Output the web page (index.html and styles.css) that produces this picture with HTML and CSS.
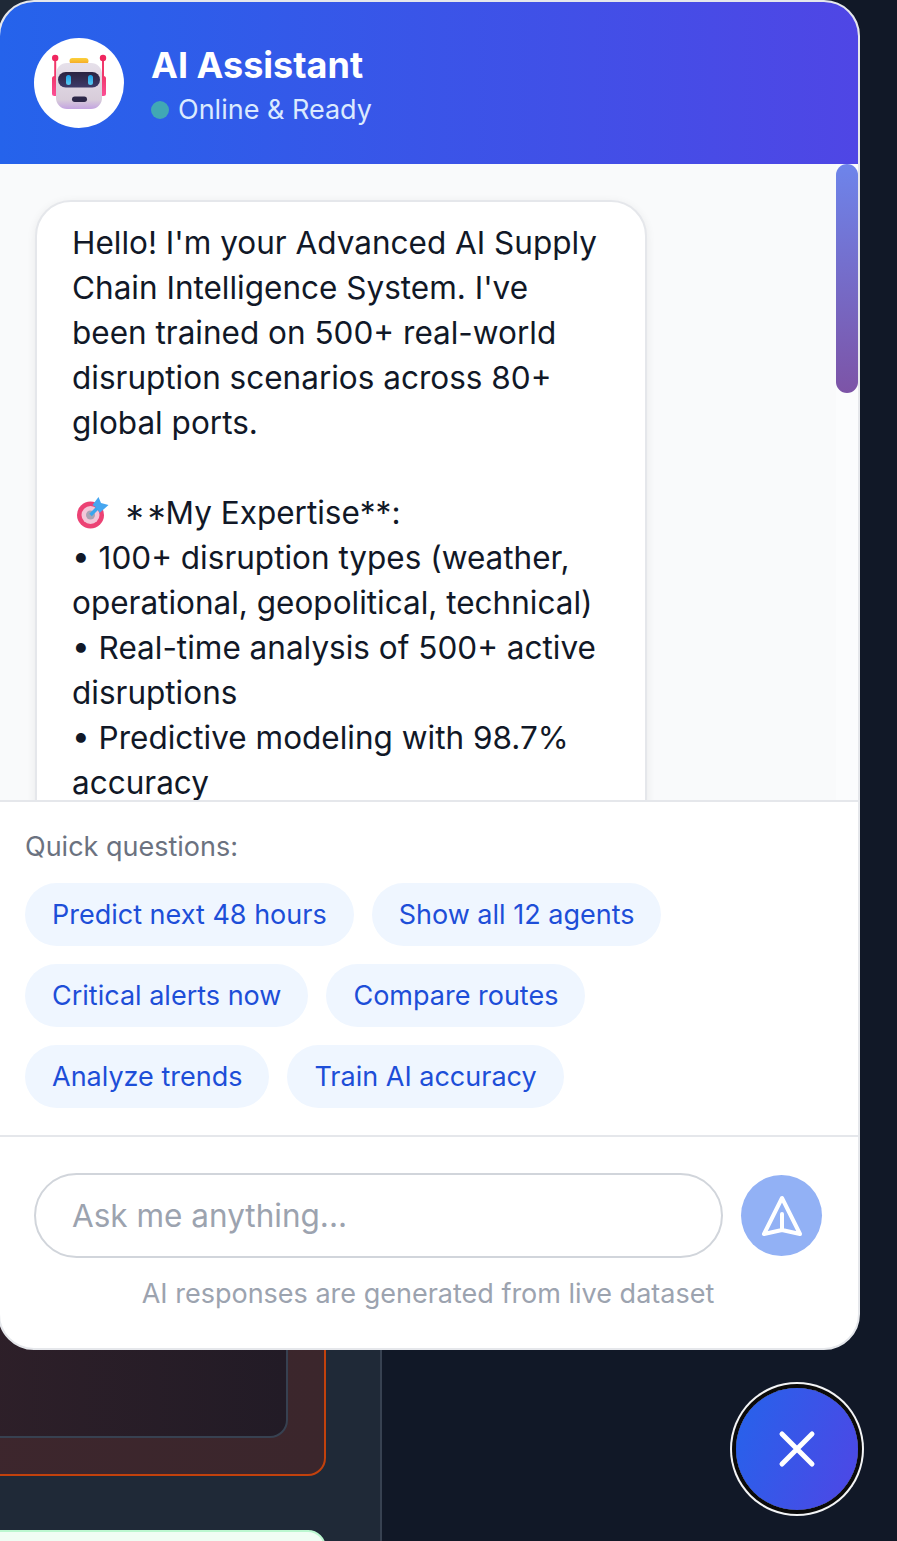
FILE: index.html
```html
<!DOCTYPE html>
<html lang="en">
<head>
<meta charset="utf-8">
<title>AI Assistant</title>
<link rel="stylesheet" href="styles.css">
</head>
<body>
<aside class="sidebar">
  <div class="alert-card"><div class="inner-card"></div></div>
  <div class="green-card"></div>
</aside>

<section class="chat">
  <header class="chat-header">
    <div class="avatar">
      <svg class="robot" width="90" height="90" viewBox="0 0 90 90">
        <defs>
          <linearGradient id="head" x1="0" y1="0" x2="0" y2="1"><stop offset="0" stop-color="#e6e0ea"/><stop offset=".8" stop-color="#d8cdda"/><stop offset="1" stop-color="#c3a3e0"/></linearGradient>
          <linearGradient id="visor" x1="0" y1="0" x2="0" y2="1"><stop offset="0" stop-color="#2a2340"/><stop offset="1" stop-color="#3d3a68"/></linearGradient>
          <linearGradient id="eye" x1="0" y1="0" x2="0" y2="1"><stop offset="0" stop-color="#1c9fe6"/><stop offset="1" stop-color="#5ccbf0"/></linearGradient>
          <linearGradient id="hat" x1="0" y1="0" x2="0" y2="1"><stop offset="0" stop-color="#fbd13c"/><stop offset="1" stop-color="#f5a623"/></linearGradient>
          <linearGradient id="ear" x1="0" y1="0" x2="0" y2="1"><stop offset="0" stop-color="#f0386b"/><stop offset="1" stop-color="#fb4f94"/></linearGradient>
        </defs>
        <rect x="20.200" y="20" width="2" height="20" fill="#f0386b"/>
        <rect x="68" y="20" width="2" height="20" fill="#f0386b"/>
        <circle cx="21.200" cy="20" r="3.200" fill="#f0265f"/>
        <circle cx="69" cy="20" r="3.200" fill="#f0265f"/>
        <rect x="18" y="38" width="8" height="20" rx="2.500" fill="url(#ear)"/>
        <rect x="64" y="38" width="8" height="20" rx="2.500" fill="url(#ear)"/>
        <rect x="35.500" y="20" width="19" height="6" rx="3" fill="url(#hat)"/>
        <rect x="22" y="25" width="46" height="46" rx="11" fill="url(#head)"/>
        <rect x="24" y="34" width="42" height="15.500" rx="7.750" fill="url(#visor)"/>
        <rect x="32" y="37" width="5" height="10" rx="2.500" fill="url(#eye)"/>
        <rect x="54" y="37" width="5" height="10" rx="2.500" fill="url(#eye)"/>
        <rect x="38" y="58.500" width="15" height="5.500" rx="2.750" fill="#2c2748"/>
      </svg>
    </div>
    <div class="header-text">
      <h1 class="title">AI Assistant</h1>
      <p class="status"><span class="dot"></span>Online &amp; Ready</p>
    </div>
  </header>

  <div class="messages">
    <div class="bubble">Hello! I'm your Advanced AI Supply Chain Intelligence System. I've been trained on 500+ real-world disruption scenarios across 80+ global ports.

<svg class="target" width="34" height="34" viewBox="0 0 34 34"><circle cx="15.500" cy="19" r="13.500" fill="#ec4274"/><circle cx="15.500" cy="19" r="9" fill="#f3c6d8"/><circle cx="15.500" cy="19" r="4.500" fill="#a9a3b3"/><path d="M15.500 19L25 9.500" stroke="#38a6ee" stroke-width="3.500"/><path d="M17.500 9L23.500 1 26 7 33.500 9 24.500 17 22 12z" fill="#46a6f0"/></svg><span class="stars"> **</span>My Expertise**:
• 100+ disruption types (weather, operational, geopolitical, technical)
• Real-time analysis of 500+ active disruptions
• Predictive modeling with 98.7% accuracy</div>
    <div class="scroll-track"><div class="scroll-thumb"></div></div>
  </div>

  <div class="quick">
    <p class="quick-label">Quick questions:</p>
    <div class="chips">
      <button class="chip">Predict next 48 hours</button>
      <button class="chip">Show all 12 agents</button>
      <button class="chip">Critical alerts now</button>
      <button class="chip">Compare routes</button>
      <button class="chip">Analyze trends</button>
      <button class="chip">Train AI accuracy</button>
    </div>
  </div>

  <div class="composer">
    <div class="input-row">
      <input class="input" type="text" placeholder="Ask me anything...">
      <button class="send" aria-label="Send">
        <svg width="48" height="48" viewBox="0 0 24 24" fill="none" stroke="#fff" stroke-width="2" stroke-linecap="round" stroke-linejoin="round"><path d="M12 19l9 2-9-18-9 18 9-2zm0 0v-8"/></svg>
      </button>
    </div>
    <p class="note">AI responses are generated from live dataset</p>
  </div>
</section>

<button class="fab" aria-label="Close">
  <svg width="60" height="60" viewBox="0 0 24 24" fill="none" stroke="#fff" stroke-width="2" stroke-linecap="round" stroke-linejoin="round"><path d="M6 18L18 6M6 6l12 12"/></svg>
</button>
</body>
</html>
```
FILE: styles.css
```css
* { box-sizing: border-box; }
html, body { margin: 0; height: 100%; }
body {
  height: 1541px;
  overflow: hidden;
  background: #111827;
  font-family: Inter, "Liberation Sans", sans-serif;
  position: relative;
}
.sidebar {
  width: 382px;
  height: 1541px;
  background: #1f2937;
  border-right: 2px solid #374151;
  overflow: hidden;
  padding-top: 30px;
}
.alert-card {
  width: 376px;
  height: 1446px;
  margin-left: -50px;
  padding: 0 36px 36px 0;
  background: linear-gradient(90deg, #3d262d, #3b262c);
  border: 2px solid #c2410c;
  border-radius: 0 0 18px 18px;
}
.inner-card {
  height: 100%;
  background: linear-gradient(90deg, #2f2029, #221b26);
  border: 2px solid #374151;
  border-radius: 0 0 18px 18px;
}
.green-card {
  width: 376px;
  height: 80px;
  margin-left: -50px;
  margin-top: 54px;
  background: #f0fdf4;
  border: 2px solid #bbf7d0;
  border-radius: 18px;
}
.chat {
  position: absolute;
  left: -2px;
  top: 0;
  width: 862px;
  height: 1350px;
  display: flex;
  flex-direction: column;
  background: #fff;
  border: 2px solid #e5e7eb;
  border-radius: 36px;
  overflow: hidden;
}
.chat-header {
  flex: none;
  height: 162px;
  display: flex;
  align-items: center;
  gap: 27px;
  padding: 0 34px;
  background: linear-gradient(90deg, #2563eb, #4f46e5);
}
.avatar {
  flex: none;
  width: 90px;
  height: 90px;
  border-radius: 50%;
  background: #fff;
}
.robot { display: block; }
.header-text { display: flex; flex-direction: column; gap: 4px; padding-top: 4px; }
.title {
  margin: 0;
  font-size: 36px;
  line-height: 45px;
  font-weight: 700;
  color: #fff;
}
.status {
  margin: 0;
  display: flex;
  align-items: center;
  gap: 9px;
  font-size: 27px;
  line-height: 36px;
  color: #dbeafe;
}
.dot {
  width: 18px;
  height: 18px;
  border-radius: 50%;
  background: #41a8b4;
}
.messages {
  flex: 1;
  min-height: 0;
  position: relative;
  overflow: hidden;
  background: #f9fafb;
  padding: 36px 34px 0 35px;
}
.bubble {
  width: 612px;
  padding: 18px 36px 36px 35px;
  background: #fff;
  border: 2px solid #e5e7eb;
  border-radius: 36px;
  box-shadow: 0 2px 10px rgba(0, 0, 0, .07);
  font-size: 31.500px;
  line-height: 45px;
  color: #111827;
  white-space: pre-line;
}
.target { vertical-align: -6px; margin-left: 3px; }
.stars {
  font-feature-settings: "case";
  letter-spacing: 1.700px;
  margin-left: 5px;
  margin-right: -3px;
}
.scroll-track {
  position: absolute;
  right: 0;
  top: 0;
  bottom: 0;
  width: 22px;
  background: #fbfcfd;
}
.scroll-thumb {
  height: 229px;
  border-radius: 11px;
  background: linear-gradient(#667eea, #764ba2);
  opacity: .95;
}
.quick {
  flex: none;
  height: 337px;
  padding: 27px 25px 0;
  background: #fff;
  border-top: 2px solid #e5e7eb;
  border-bottom: 2px solid #e5e7eb;
}
.quick-label {
  margin: 0 0 18px;
  font-size: 27px;
  line-height: 36px;
  color: #6b7280;
}
.chips { display: flex; flex-wrap: wrap; gap: 18px; }
.chip {
  height: 63px;
  padding: 0 27px;
  border: 0;
  border-radius: 32px;
  background: #eff6ff;
  color: #1d4ed8;
  font: 27px/36px Inter, "Liberation Sans", sans-serif;
}
.composer {
  flex: none;
  height: 211px;
  padding: 36px 36px 0 34px;
}
.input-row { display: flex; align-items: center; gap: 18px; }
.input {
  flex: none;
  width: 689px;
  height: 85px;
  padding: 0 36px;
  border: 2px solid #d1d5db;
  border-radius: 43px;
  background: #fff;
  font: 31.500px Inter, "Liberation Sans", sans-serif;
  color: #111827;
  outline: none;
}
.input::placeholder { color: #9ca3af; opacity: 1; }
.send {
  flex: none;
  width: 81px;
  height: 81px;
  padding: 0;
  border: 0;
  border-radius: 50%;
  background: #92b1f5;
  display: flex;
  align-items: center;
  justify-content: center;
}
.note {
  margin: 18px 0 0;
  width: 788px;
  text-align: center;
  font-size: 27px;
  line-height: 36px;
  color: #9ca3af;
}
.fab {
  position: absolute;
  left: 736px;
  top: 1388px;
  width: 122px;
  height: 122px;
  padding: 0;
  border: 0;
  border-radius: 50%;
  background: linear-gradient(110deg, #2563eb, #4f46e5);
  box-shadow: 0 0 0 4px #0a0a0a, 0 0 0 6px #f3f4f6;
  display: flex;
  align-items: center;
  justify-content: center;
}
```
